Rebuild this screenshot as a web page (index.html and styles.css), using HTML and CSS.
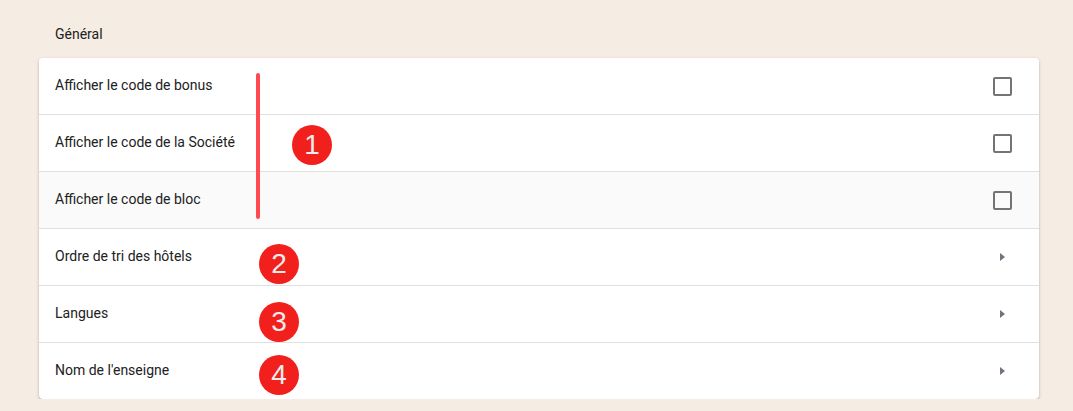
FILE: index.html
```html
<!DOCTYPE html>
<html lang="fr">
<head>
<meta charset="utf-8">
<link rel="stylesheet" href="styles.css">
</head>
<body>
<div class="page">
  <div class="section-title">Général</div>
  <div class="card">
    <div class="row"><span class="label">Afficher le code de bonus</span><span class="checkbox"></span></div>
    <div class="row"><span class="label">Afficher le code de la Société</span><span class="checkbox"></span></div>
    <div class="row row-hover"><span class="label">Afficher le code de bloc</span><span class="checkbox"></span></div>
    <div class="row"><span class="label">Ordre de tri des hôtels</span><span class="arrow"></span></div>
    <div class="row"><span class="label">Langues</span><span class="arrow"></span></div>
    <div class="row row-last"><span class="label">Nom de l'enseigne</span><span class="arrow"></span></div>

    <div class="mark-line"></div>
    <div class="badge badge-1">1</div>
    <div class="badge badge-2">2</div>
    <div class="badge badge-3">3</div>
    <div class="badge badge-4">4</div>
  </div>
</div>
</body>
</html>
```

FILE: styles.css
```css
html, body {
  margin: 0;
  padding: 0;
  background: #f5ece3;
}
body {
  font-family: Roboto, "Liberation Sans", Arial, sans-serif;
  color: #212121;
  font-size: 14px;
}
.page {
  padding: 24px 0 0 39px;
}
.section-title {
  padding-left: 16px;
  line-height: 20px;
  height: 20px;
  margin-bottom: 14px;
}
.card {
  position: relative;
  width: 1000px;
  background: #fff;
  border-radius: 4px;
  box-shadow: 0 2px 2px rgba(0,0,0,0.18), 0 1px 4px rgba(0,0,0,0.12);
}
.row {
  display: flex;
  align-items: center;
  justify-content: space-between;
  height: 56px;
  padding: 0 27px 0 16px;
  border-bottom: 1px solid #e0e0e0;
}
.row-hover {
  background: #fafafa;
}
.row-last {
  border-bottom: none;
  border-radius: 0 0 4px 4px;
}
.label {
  line-height: 20px;
  padding-bottom: 2px;
}
.checkbox {
  width: 15px;
  height: 15px;
  border: 2px solid #747474;
  border-radius: 2px;
  margin-top: 1px;
}
.arrow {
  width: 0;
  height: 0;
  border-left: 5px solid #6f7480;
  border-top: 4px solid transparent;
  border-bottom: 4px solid transparent;
  margin-right: 7px;
}
.mark-line {
  position: absolute;
  left: 217px;
  top: 15px;
  width: 4px;
  height: 146px;
  border-radius: 2px;
  background: #ff4b4f;
}
.badge {
  position: absolute;
  width: 40px;
  height: 40px;
  border-radius: 50%;
  background: #f2201c;
  color: #ececec;
  font-family: "Liberation Sans", Arial, sans-serif;
  font-size: 28px;
  line-height: 40px;
  text-align: center;
}
.badge-1 { left: 253px; top: 67px; }
.badge-2 { left: 220px; top: 186px; }
.badge-3 { left: 220px; top: 244px; }
.badge-4 { left: 220px; top: 297px; }
```
